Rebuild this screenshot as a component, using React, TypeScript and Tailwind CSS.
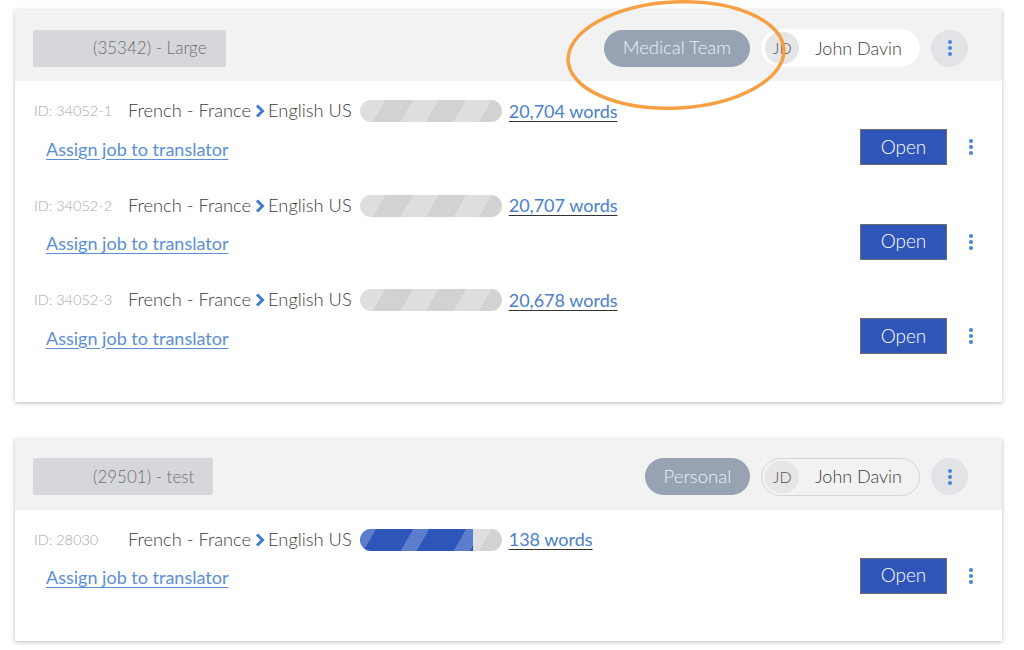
import React from "react";

type Job = {
  id: string;
  words: string;
  progress?: number;
};

type Project = {
  title: string;
  team: string;
  userFilled: boolean;
  jobs: Job[];
  highlight?: boolean;
};

const projects: Project[] = [
  {
    title: "(35342) - Large",
    team: "Medical Team",
    userFilled: true,
    highlight: true,
    jobs: [
      { id: "ID: 34052-1", words: "20,704 words" },
      { id: "ID: 34052-2", words: "20,707 words" },
      { id: "ID: 34052-3", words: "20,678 words" },
    ],
  },
  {
    title: "(29501) - test",
    team: "Personal",
    userFilled: false,
    jobs: [{ id: "ID: 28030", words: "138 words", progress: 80 }],
  },
];

function Dots({ className = "" }: { className?: string }) {
  return (
    <svg width="6" height="18" viewBox="0 0 6 18" className={className}>
      <circle cx="3" cy="3" r="2.1" fill="#4f86d2" />
      <circle cx="3" cy="9" r="2.1" fill="#4f86d2" />
      <circle cx="3" cy="15" r="2.1" fill="#4f86d2" />
    </svg>
  );
}

function Chevron() {
  return (
    <svg width="10" height="14" viewBox="0 0 10 14" className="ml-[4px] mr-[3px]">
      <path d="M2 1.5 L7.5 7 L2 12.5" fill="none" stroke="#3f7ccc" strokeWidth="3" strokeLinejoin="miter" />
    </svg>
  );
}

function ProgressBar({ progress }: { progress?: number }) {
  return (
    <div className="relative h-[22px] w-[142px] overflow-hidden rounded-full bg-[repeating-linear-gradient(120deg,#dedede_0px,#dedede_22px,#d2d2d2_22px,#d2d2d2_46px)]">
      {progress !== undefined && (
        <div
          className="h-full bg-[repeating-linear-gradient(120deg,#5c7dcb_0px,#5c7dcb_14px,#2e55b9_14px,#2e55b9_46px)]"
          style={{ width: `${progress}%` }}
        />
      )}
    </div>
  );
}

function JobRow({ job }: { job: Job }) {
  return (
    <div className="h-[94.5px] pt-[19px]">
      <div className="flex h-[22px] items-center">
        <span className="w-[94px] shrink-0 text-[14.5px] font-light text-[#a8a8a8]">{job.id}</span>
        <span className="text-[18.3px] font-light text-[#3c3c3c]">French - France</span>
        <Chevron />
        <span className="mr-[8px] text-[18.3px] font-light text-[#3c3c3c]">English US</span>
        <ProgressBar progress={job.progress} />
        <a
          href="#"
          className="ml-[7px] text-[18px] text-[#4a80cc] underline decoration-[#333] underline-offset-[3px]"
        >
          {job.words}
        </a>
      </div>
      <div className="mt-[7px] flex h-[36px] items-center justify-between">
        <a
          href="#"
          className="ml-[12px] mt-[4px] text-[18px] text-[#5a8fd8] underline underline-offset-[3px]"
        >
          Assign job to translator
        </a>
        <div className="flex items-center">
          <button className="ml-[1px] h-[36px] w-[87px] border border-[#6d6d6d] bg-[#2f55b9] text-[19px] font-light text-white">
            Open
          </button>
          <Dots className="ml-[21px] mr-[9px]" />
        </div>
      </div>
    </div>
  );
}

function ProjectCard({ project }: { project: Project }) {
  return (
    <div className="bg-white shadow-[0_1px_4px_rgba(0,0,0,0.28)]">
      <div className="relative flex h-[71px] items-center justify-between bg-[#f2f2f2] pl-[18px] pr-[34px] pt-[5px]">
        <div className="flex h-[37px] items-center rounded-[2px] bg-[#d6d7db] pl-[60px] pr-[19px] text-[17px] font-light text-[#6f6f6f]">
          {project.title}
        </div>
        <div className="flex items-center">
          <div className="flex h-[37px] items-center rounded-full bg-[#97a3b3] px-[19px] text-[18.5px] font-light text-[#eef1f4]">
            {project.team}
          </div>
          <div
            className={`ml-[11px] flex h-[38px] items-center rounded-full border pl-[3px] pr-[17px] ${
              project.userFilled ? "border-white bg-white" : "border-[#d6d6d6] bg-[#f2f2f2]"
            }`}
          >
            <span className="flex h-[32px] w-[34px] items-center justify-center rounded-full bg-[#e6e6e6] text-[16px] font-light text-[#555]">
              JD
            </span>
            <span className="ml-[16px] text-[18px] font-light text-[#3c3c3c]">John Davin</span>
          </div>
          <button className="ml-[11px] flex h-[37px] w-[37px] items-center justify-center rounded-full bg-[#e1e3e6]">
            <Dots />
          </button>
        </div>
        {project.highlight && (
          <svg
            width="230"
            height="120"
            viewBox="0 0 230 120"
            className="pointer-events-none absolute left-[546px] top-[-14px]"
          >
            <ellipse
              cx="115"
              cy="59"
              rx="108"
              ry="53"
              transform="rotate(-3 115 59)"
              fill="none"
              stroke="#f5a044"
              strokeWidth="3.5"
            />
          </svg>
        )}
      </div>
      <div className="px-[19px] pb-[37px]">
        {project.jobs.map((job) => (
          <JobRow key={job.id} job={job} />
        ))}
      </div>
    </div>
  );
}

export default function App() {
  return (
    <div className="flex min-h-[650px] flex-col gap-[37px] bg-white px-[15px] pt-[10px] pr-[22px] font-['Lato',sans-serif]">
      {projects.map((p) => (
        <ProjectCard key={p.title} project={p} />
      ))}
    </div>
  );
}
